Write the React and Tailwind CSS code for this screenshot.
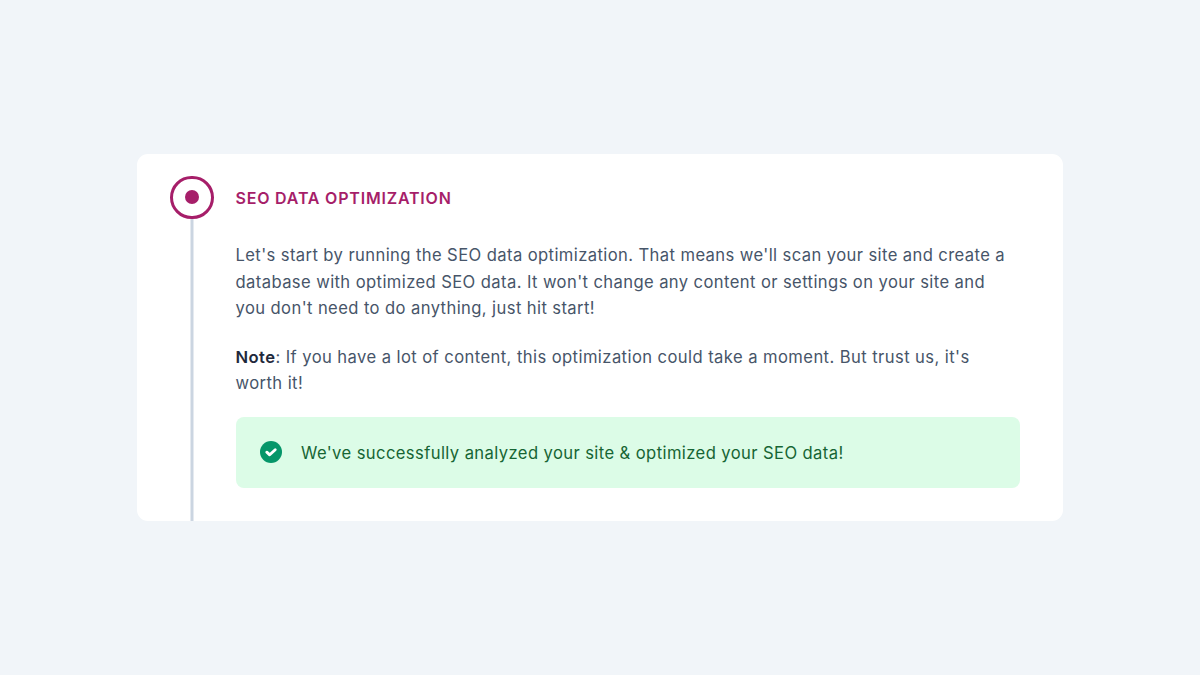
function CheckIcon() {
  return (
    <svg className="w-[22px] h-[22px] shrink-0" viewBox="0 0 22 22" fill="none">
      <circle cx="11" cy="11" r="11" fill="#059669" />
      <path d="M6.8 11.2l2.9 2.6 5.5-5" stroke="#fff" strokeWidth="2.9" strokeLinecap="round" strokeLinejoin="round" />
    </svg>
  );
}

export default function App() {
  return (
    <div className="min-h-screen bg-[#f1f5f9] flex items-center justify-center font-['Inter',sans-serif]">
      <div className="w-[926px] h-[367px] bg-white rounded-[11px] flex pl-[33px] pr-[43px] pt-[21.5px]">
        {/* Step marker */}
        <div className="w-[44px] shrink-0 flex flex-col items-center">
          <div className="w-[43.5px] h-[43.5px] shrink-0 rounded-full border-[3px] border-[#a61e69] flex items-center justify-center">
            <div className="w-[14px] h-[14px] rounded-full bg-[#a61e69]" />
          </div>
          <div className="w-[3px] flex-1 bg-[#cbd5e1] -translate-x-[0.5px]" />
        </div>

        {/* Content */}
        <div className="ml-[21.5px] flex-1 min-w-0">
          <h2 className="h-[44px] flex items-center text-[16px] font-semibold tracking-[0.8px] text-[#a61e69]">
            SEO DATA OPTIMIZATION
          </h2>
          <p className="mt-[22.5px] max-w-[775px] text-[16.6px] leading-[26.6px] tracking-[0.4px] text-[#475569]">
            Let's start by running the SEO data optimization. That means we'll scan your site and create a database with
            optimized SEO data. It won't change any content or settings on your site and you don't need to do anything,
            just hit start!
          </p>
          <p className="mt-[22px] max-w-[775px] text-[16.6px] leading-[26.6px] tracking-[0.42px] text-[#475569]">
            <strong className="font-semibold text-[#1e293b]">Note</strong>: If you have a lot of content, this
            optimization could take a moment. But trust us, it's worth it!
          </p>
          <div className="mt-[20px] h-[71px] rounded-[8px] bg-[#dcfce7] flex items-center pl-[24px] pr-[22px] gap-[19.5px]">
            <CheckIcon />
            <p className="pt-[1px] text-[16.6px] leading-[26.6px] tracking-[0.4px] text-[#166534]">
              We've successfully analyzed your site &amp; optimized your SEO data!
            </p>
          </div>
        </div>
      </div>
    </div>
  );
}
